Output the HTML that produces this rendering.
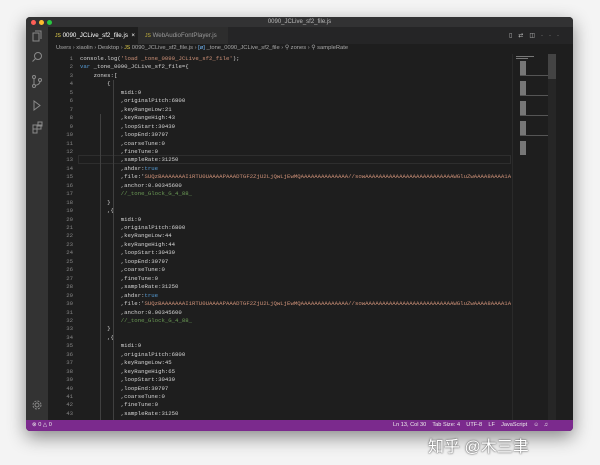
<!DOCTYPE html>
<html><head><meta charset="utf-8"><style>
*{margin:0;padding:0;box-sizing:border-box}
body{width:600px;height:465px;background:#f4f4f4;position:relative;overflow:hidden;font-family:"Liberation Sans",sans-serif}
.win{position:absolute;left:26px;top:17px;width:547px;height:414px;background:#1e1e1e;border-radius:4px;overflow:hidden;box-shadow:0 6px 18px rgba(0,0,0,.45)}
.title{position:absolute;left:0;top:0;width:100%;height:10px;background:#323233;color:#bbb;font-size:6px;text-align:center;line-height:10px}
.dot{position:absolute;top:2.5px;width:5px;height:5px;border-radius:50%}
.act{position:absolute;left:0;top:10px;width:22px;height:394px;background:#333}
.tabs{position:absolute;left:22px;top:10px;right:0;height:17px;background:#252526}
.tab{position:absolute;top:0;height:17px;line-height:17px;font-size:6.2px;padding-left:7px;white-space:nowrap;overflow:hidden}
.bc{position:absolute;left:22px;top:27px;right:0;height:9px;color:#a9a9a9;font-size:5.8px;line-height:9px;padding-left:8px;white-space:nowrap}
.code{position:absolute;left:22px;top:37px;width:463px;height:367px;font-family:"Liberation Mono",monospace;font-size:5.67px;overflow:hidden}
.ln{position:absolute;left:0;width:25px;text-align:right;color:#858585}
.tx{position:absolute;left:32px;color:#d4d4d4;white-space:pre}
.mini{position:absolute;left:486px;top:37px;width:36px;height:367px;background:#1e1e1e;border-left:1px solid #2a2a2a}
.sb{position:absolute;left:522px;top:37px;width:8px;height:367px;background:#262626}
.status{position:absolute;left:0;top:403px;width:100%;height:11px;background:#7b2a8d;color:#eee;font-size:5.6px;line-height:11px;white-space:nowrap}
.s{color:#ce9178}.k{color:#569cd6}.c{color:#6a9955}
.wm{position:absolute;left:428px;top:433px;font-family:"Liberation Sans","Noto Sans CJK SC",sans-serif;font-size:16px;color:#fff;text-shadow:0 0 2px #666,0 0 1px #444}
</style></head><body>
<div class="win">
<div class="title">0090_JCLive_sf2_file.js</div>
<div class="dot" style="left:5px;background:#fe5f57"></div>
<div class="dot" style="left:13px;background:#febc2e"></div>
<div class="dot" style="left:21px;background:#28c840"></div>
<div class="act">
<svg width="22" height="394" fill="none" stroke="#8a8a8a" stroke-width="1">
<rect x="7" y="6" width="6" height="8"/><path d="M9 4h6v8"/>
<circle cx="12" cy="29" r="3.5"/><path d="M9.5 31.5l-3 3"/>
<circle cx="8" cy="50" r="1.5"/><circle cx="8" cy="59" r="1.5"/><circle cx="14" cy="53" r="1.5"/><path d="M8 51.5v6M14 54.5q0 3-5 4"/>
<path d="M8 74v9l6-4.5z"/>
<rect x="7" y="98" width="4" height="4"/><rect x="11" y="98" width="4" height="4"/><rect x="7" y="102" width="4" height="4"/><rect x="12" y="95" width="4" height="4"/>
<circle cx="11" cy="378" r="2"/><circle cx="11" cy="378" r="4" stroke-dasharray="2 1.2"/>
</svg></div>
<div class="tabs">
<div class="tab" style="left:0;width:90px;background:#1e1e1e;color:#fff"><span style="color:#e8d44d;font-size:5px">JS</span> 0090_JCLive_sf2_file.js &nbsp;×</div>
<div class="tab" style="left:90px;width:90px;background:#2d2d2d;color:#999"><span style="color:#c8b53d;font-size:5px">JS</span> WebAudioFontPlayer.js</div>
<div style="position:absolute;right:8px;top:5px;color:#bbb;font-size:6px;letter-spacing:6px;white-space:nowrap">▯⇄◫···</div>
</div>
<div class="bc">Users › xiaolin › Desktop › <span style="color:#e8d44d;font-size:5px">JS</span> 0090_JCLive_sf2_file.js › <span style="color:#75beff">[ø]</span> _tone_0090_JCLive_sf2_file › ⚲ zones › ⚲ sampleRate</div>
<div class="code" id="code"></div>
<div class="mini"><svg width="36" height="367"><g fill="#777">
<rect x="3" y="2" width="18" height="1"/><rect x="3" y="4" width="12" height="1"/>
<rect x="7" y="7" width="6" height="14"/><rect x="7" y="27" width="6" height="14"/><rect x="7" y="47" width="6" height="14"/><rect x="7" y="67" width="6" height="14"/><rect x="7" y="87" width="6" height="14"/></g>
<g fill="#555"><rect x="7" y="21" width="29" height="1"/><rect x="7" y="41" width="29" height="1"/><rect x="7" y="61" width="29" height="1"/><rect x="7" y="81" width="29" height="1"/></g></svg></div>
<div class="sb"><div style="position:absolute;top:0;left:0;width:8px;height:25px;background:#444"></div></div>
<div class="status"><span style="margin-left:6px">⊗ 0 △ 0</span>
<span style="position:absolute;left:367px">Ln 13, Col 30 &nbsp;&nbsp; Tab Size: 4 &nbsp;&nbsp; UTF-8 &nbsp;&nbsp; LF &nbsp;&nbsp; JavaScript &nbsp;&nbsp; ☺ &nbsp; ♫</span></div>
</div>
<div class="wm">知乎 @木三聿</div>
<script>
var F="SUQzBAAAAAAAI1RTU0UAAAAPAAADTGF2ZjU2LjQwLjEwMQAAAAAAAAAAAAAA//sowAAAAAAAAAAAAAAAAAAAAAAAAAAWGluZwAAAA8AAAA1AABP";
function blk(lo,hi){return ["\t\t\tmidi:9","\t\t\t,originalPitch:6800","\t\t\t,keyRangeLow:"+lo,"\t\t\t,keyRangeHigh:"+hi,"\t\t\t,loopStart:30439","\t\t\t,loopEnd:39797","\t\t\t,coarseTune:0","\t\t\t,fineTune:0","\t\t\t,sampleRate:31250","\t\t\t,ahdsr:<span class=k>true</span>","\t\t\t,file:'<span class=s>"+F+"</span>","\t\t\t,anchor:0.00345600","\t\t\t<span class=c>//_tone_Glock_G_4_88_</span>"];}
var L=["console.log(<span class=s>'load _tone_0090_JCLive_sf2_file'</span>);","<span class=k>var</span> _tone_0090_JCLive_sf2_file={","\tzones:[","\t\t{"].concat(blk(21,43),["\t\t}","\t\t,{"],blk(44,44),["\t\t}","\t\t,{"],blk(45,65).slice(0,9));
var h="";for(var i=0;i<L.length;i++){var y=i*8.45+1;
if(i==12)h+='<div style="position:absolute;left:30px;top:'+(y-1)+'px;width:433px;height:8.5px;border:1px solid #2e2e2e"></div>';
h+='<div class=ln style="top:'+y+'px">'+(i+1)+'</div><div class=tx style="top:'+y+'px">'+L[i].replace(/\t/g,"    ")+'</div>';}
h+='<div style="position:absolute;left:52px;top:60px;width:1px;height:307px;background:#404040"></div><div style="position:absolute;left:65px;top:26px;width:1px;height:341px;background:#404040"></div>';
document.getElementById("code").innerHTML=h;
</script>
</body></html>
